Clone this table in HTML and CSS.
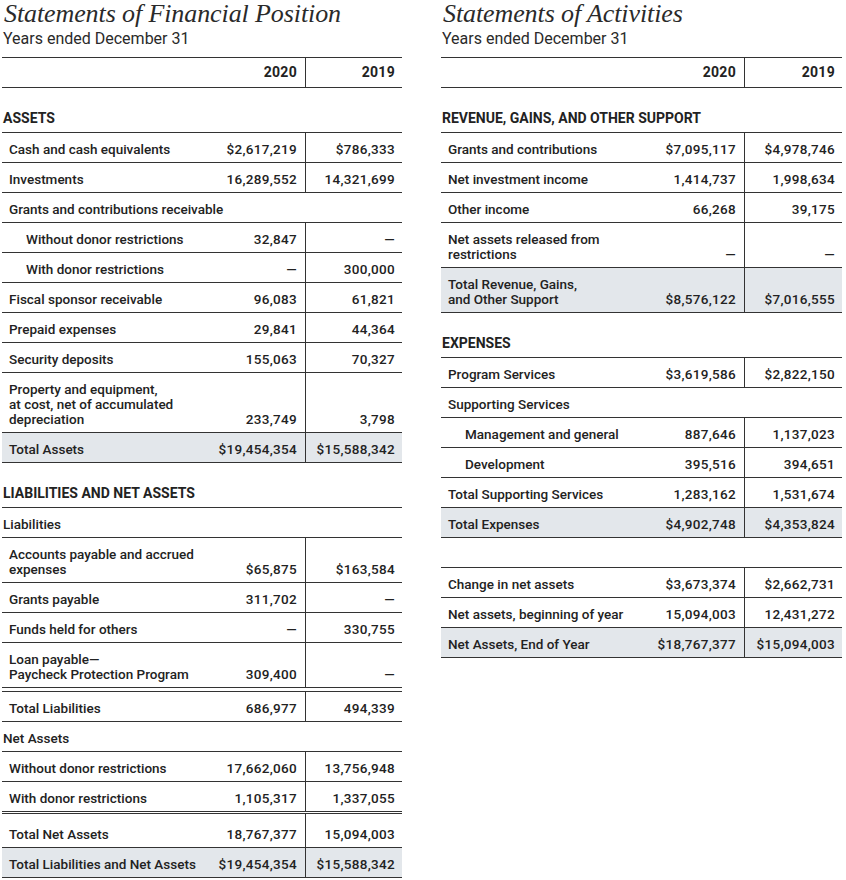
FILE: index.html
```html
<!DOCTYPE html>
<html lang="en">
<head>
<meta charset="utf-8">
<title>Financial Statements</title>
<link rel="stylesheet" href="styles.css">
</head>
<body>
<div class="page">
  <section class="stmt stmt-left">
    <h1 class="title">Statements of Financial Position</h1>
    <p class="sub">Years ended December 31</p>
    <div class="table">
      <div class="row head"><span class="lbl">&nbsp;</span><span class="v1">2020</span><span class="v2">2019</span></div>
      <div class="sec">ASSETS</div>
      <div class="row"><span class="lbl">Cash and cash equivalents</span><span class="v1">$2,617,219</span><span class="v2">$786,333</span></div>
      <div class="row"><span class="lbl">Investments</span><span class="v1">16,289,552</span><span class="v2">14,321,699</span></div>
      <div class="row grp"><span class="lbl">Grants and contributions receivable</span></div>
      <div class="row ind"><span class="lbl">Without donor restrictions</span><span class="v1">32,847</span><span class="v2">—</span></div>
      <div class="row ind"><span class="lbl">With donor restrictions</span><span class="v1">—</span><span class="v2">300,000</span></div>
      <div class="row"><span class="lbl">Fiscal sponsor receivable</span><span class="v1">96,083</span><span class="v2">61,821</span></div>
      <div class="row"><span class="lbl">Prepaid expenses</span><span class="v1">29,841</span><span class="v2">44,364</span></div>
      <div class="row"><span class="lbl">Security deposits</span><span class="v1">155,063</span><span class="v2">70,327</span></div>
      <div class="row"><span class="lbl">Property and equipment,<br>at cost, net of accumulated<br>depreciation</span><span class="v1">233,749</span><span class="v2">3,798</span></div>
      <div class="row total"><span class="lbl">Total Assets</span><span class="v1">$19,454,354</span><span class="v2">$15,588,342</span></div>
      <div class="sec">LIABILITIES AND NET ASSETS</div>
      <div class="row grp flush"><span class="lbl">Liabilities</span></div>
      <div class="row"><span class="lbl">Accounts payable and accrued<br>expenses</span><span class="v1">$65,875</span><span class="v2">$163,584</span></div>
      <div class="row"><span class="lbl">Grants payable</span><span class="v1">311,702</span><span class="v2">—</span></div>
      <div class="row"><span class="lbl">Funds held for others</span><span class="v1">—</span><span class="v2">330,755</span></div>
      <div class="row"><span class="lbl">Loan payable—<br>Paycheck Protection Program</span><span class="v1">309,400</span><span class="v2">—</span></div>
      <div class="dbl"></div>
      <div class="row"><span class="lbl">Total Liabilities</span><span class="v1">686,977</span><span class="v2">494,339</span></div>
      <div class="row grp flush"><span class="lbl">Net Assets</span></div>
      <div class="row"><span class="lbl">Without donor restrictions</span><span class="v1">17,662,060</span><span class="v2">13,756,948</span></div>
      <div class="row"><span class="lbl">With donor restrictions</span><span class="v1">1,105,317</span><span class="v2">1,337,055</span></div>
      <div class="dbl thin"></div>
      <div class="row tall"><span class="lbl">Total Net Assets</span><span class="v1">18,767,377</span><span class="v2">15,094,003</span></div>
      <div class="row total"><span class="lbl">Total Liabilities and Net Assets</span><span class="v1">$19,454,354</span><span class="v2">$15,588,342</span></div>
    </div>
  </section>

  <section class="stmt stmt-right">
    <h1 class="title">Statements of Activities</h1>
    <p class="sub">Years ended December 31</p>
    <div class="table">
      <div class="row head"><span class="lbl">&nbsp;</span><span class="v1">2020</span><span class="v2">2019</span></div>
      <div class="sec">REVENUE, GAINS, AND OTHER SUPPORT</div>
      <div class="row"><span class="lbl">Grants and contributions</span><span class="v1">$7,095,117</span><span class="v2">$4,978,746</span></div>
      <div class="row"><span class="lbl">Net investment income</span><span class="v1">1,414,737</span><span class="v2">1,998,634</span></div>
      <div class="row"><span class="lbl">Other income</span><span class="v1">66,268</span><span class="v2">39,175</span></div>
      <div class="row"><span class="lbl">Net assets released from<br>restrictions</span><span class="v1">—</span><span class="v2">—</span></div>
      <div class="row total"><span class="lbl">Total Revenue, Gains,<br>and Other Support</span><span class="v1">$8,576,122</span><span class="v2">$7,016,555</span></div>
      <div class="sec">EXPENSES</div>
      <div class="row"><span class="lbl">Program Services</span><span class="v1">$3,619,586</span><span class="v2">$2,822,150</span></div>
      <div class="row grp"><span class="lbl">Supporting Services</span></div>
      <div class="row ind"><span class="lbl">Management and general</span><span class="v1">887,646</span><span class="v2">1,137,023</span></div>
      <div class="row ind"><span class="lbl">Development</span><span class="v1">395,516</span><span class="v2">394,651</span></div>
      <div class="row"><span class="lbl">Total Supporting Services</span><span class="v1">1,283,162</span><span class="v2">1,531,674</span></div>
      <div class="row total"><span class="lbl">Total Expenses</span><span class="v1">$4,902,748</span><span class="v2">$4,353,824</span></div>
      <div class="spacer"></div>
      <div class="row"><span class="lbl">Change in net assets</span><span class="v1">$3,673,374</span><span class="v2">$2,662,731</span></div>
      <div class="row"><span class="lbl">Net assets, beginning of year</span><span class="v1">15,094,003</span><span class="v2">12,431,272</span></div>
      <div class="row total"><span class="lbl">Net Assets, End of Year</span><span class="v1">$18,767,377</span><span class="v2">$15,094,003</span></div>
    </div>
  </section>
</div>
</body>
</html>
```

FILE: styles.css
```css
* { box-sizing: border-box; }

html, body {
  margin: 0;
  padding: 0;
  background: #ffffff;
}

body {
  font-family: Roboto, "Liberation Sans", Arial, sans-serif;
  color: #222222;
}

.page {
  display: flex;
  gap: 39px;
  padding-left: 2px;
}

.stmt-left { width: 400px; }
.stmt-right { width: 401px; }

.title {
  margin: 0;
  padding-left: 2px;
  font-family: "Liberation Serif", "Times New Roman", serif;
  font-style: italic;
  font-weight: normal;
  font-size: 26px;
  line-height: 28px;
  letter-spacing: -0.1px;
  color: #2a2a2a;
}

.sub {
  margin: 2px 0 0;
  padding-left: 1px;
  font-size: 16px;
  line-height: 18px;
  color: #2a2a2a;
}

.table {
  margin-top: 9px;
  font-size: 13.5px;
  line-height: 15px;
  font-weight: 500;
}

.row {
  display: grid;
  grid-template-columns: 1fr 100px 97px;
  border-bottom: 1px solid #333;
}

.stmt-right .row { grid-template-columns: 1fr 100px 98px; }

.lbl {
  padding: 9px 0 5px 7px;
  white-space: nowrap;
}

.v1 {
  padding: 9px 8px 5px 0;
  text-align: right;
  align-self: end;
  letter-spacing: 0.3px;
}

.v2 {
  border-left: 1px solid #333;
  padding: 9px 7px 5px 0;
  display: flex;
  align-items: flex-end;
  justify-content: flex-end;
  letter-spacing: 0.3px;
}

.row.head {
  border-top: 1px solid #333;
  font-weight: 700;
  font-size: 14px;
}

.row.head .lbl,
.row.head .v1,
.row.head .v2 {
  padding-top: 7px;
  padding-bottom: 7px;
}

.row.grp .lbl { grid-column: 1 / -1; }
.row.flush .lbl { padding-left: 1px; }
.row.ind .lbl { padding-left: 24px; }

.row.total { background: #e3e7eb; }

.row.tall .lbl,
.row.tall .v1,
.row.tall .v2 {
  padding-top: 13px;
}

.sec {
  padding: 23px 0 6px 1px;
  font-weight: 700;
  font-size: 14px;
  border-bottom: 1px solid #333;
}

.dbl {
  height: 4px;
  border-bottom: 1px solid #333;
}

.dbl.thin { height: 2px; }

.spacer {
  height: 30px;
  border-bottom: 1px solid #333;
}
```
